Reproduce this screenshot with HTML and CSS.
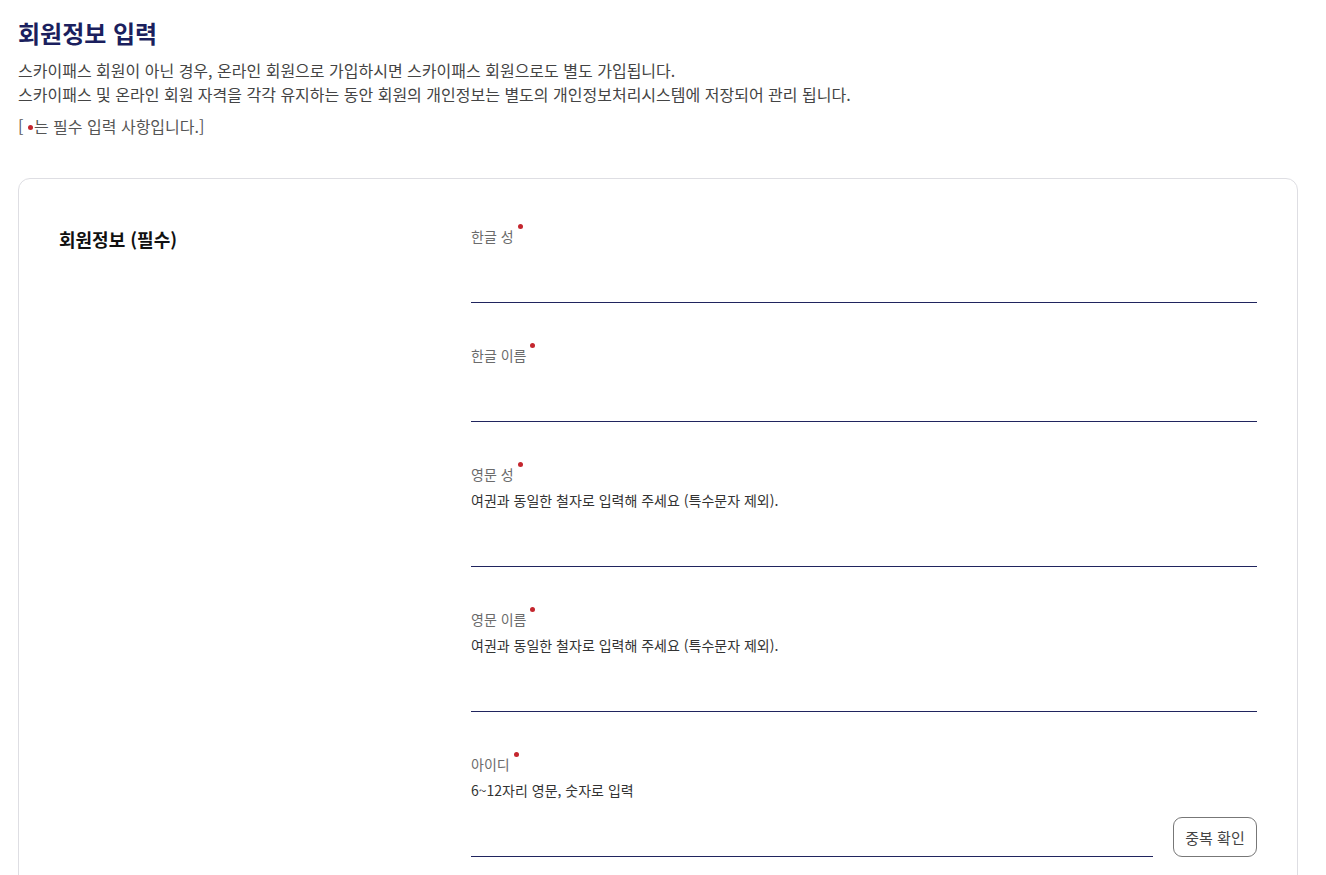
FILE: index.html
```html
<!DOCTYPE html>
<html lang="ko">
<head>
    <meta charset="UTF-8">
    <meta name="viewport" content="width=device-width, initial-scale=1.0">
    <title>회원정보 입력</title>
    <link rel="stylesheet" href="styles.css">
</head>
<body>
    <div class="page">
        <h1 class="page-title">회원정보 입력</h1>
        <p class="desc">
            스카이패스 회원이 아닌 경우, 온라인 회원으로 가입하시면 스카이패스 회원으로도 별도 가입됩니다.<br>
            스카이패스 및 온라인 회원 자격을 각각 유지하는 동안 회원의 개인정보는 별도의 개인정보처리시스템에 저장되어 관리 됩니다.
        </p>
        <p class="note">[ <span class="note-dot"></span>는 필수 입력 사항입니다.]</p>

        <section class="card">
            <h2 class="card-title">회원정보 (필수)</h2>
            <div class="fields">
                <div class="field">
                    <label class="field-label" for="korLast">한글 성</label>
                    <input class="field-input" type="text" id="korLast">
                </div>
                <div class="field">
                    <label class="field-label" for="korFirst">한글 이름</label>
                    <input class="field-input" type="text" id="korFirst">
                </div>
                <div class="field">
                    <label class="field-label" for="engLast">영문 성</label>
                    <p class="field-hint">여권과 동일한 철자로 입력해 주세요 (특수문자 제외).</p>
                    <input class="field-input" type="text" id="engLast">
                </div>
                <div class="field">
                    <label class="field-label" for="engFirst">영문 이름</label>
                    <p class="field-hint">여권과 동일한 철자로 입력해 주세요 (특수문자 제외).</p>
                    <input class="field-input" type="text" id="engFirst">
                </div>
                <div class="field">
                    <label class="field-label" for="userId">아이디</label>
                    <p class="field-hint">6~12자리 영문, 숫자로 입력</p>
                    <div class="input-row">
                        <input class="field-input" type="text" id="userId">
                        <button type="button" class="check-button">중복 확인</button>
                    </div>
                </div>
            </div>
        </section>
    </div>
</body>
</html>
```

FILE: styles.css
```css
body {
    margin: 0;
    padding: 0;
    background-color: #ffffff;
    font-family: "Noto Sans CJK KR", "Noto Sans", sans-serif;
    color: #333333;
}

.page {
    padding: 16px 28px 40px 18px;
}

.page-title {
    margin: 0;
    font-size: 24px;
    line-height: 34px;
    font-weight: 700;
    color: #1b1f5e;
}

.desc {
    margin: 8px 0 0;
    font-size: 16px;
    line-height: 24px;
    color: #444444;
}

.note {
    margin: 8px 0 0;
    font-size: 16px;
    line-height: 24px;
    color: #555555;
}

.note-dot {
    display: inline-block;
    width: 5px;
    height: 5px;
    border-radius: 50%;
    background-color: #c4262e;
    vertical-align: middle;
    margin: 0 1px 3px 0;
}

.card {
    margin-top: 40px;
    border: 1px solid #dedee3;
    border-radius: 12px;
    padding: 47px 40px 60px 40px;
    display: grid;
    grid-template-columns: 412px 1fr;
}

.card-title {
    margin: 0;
    font-size: 18px;
    line-height: 26px;
    font-weight: 700;
    color: #111111;
}

.field {
    display: flex;
    flex-direction: column;
    align-items: flex-start;
    margin-bottom: 42px;
}

.field-label {
    position: relative;
    font-size: 14px;
    line-height: 20px;
    color: #6b6b6b;
}

.field-label::after {
    content: "";
    position: absolute;
    top: -2px;
    right: -9px;
    width: 5px;
    height: 5px;
    border-radius: 50%;
    background-color: #c4262e;
}

.field-hint {
    margin: 6px 0 0;
    font-size: 14px;
    line-height: 20px;
    color: #333333;
}

.field-input {
    display: block;
    width: 100%;
    height: 57px;
    box-sizing: border-box;
    border: 0;
    border-bottom: 1px solid #20245e;
    padding: 0;
    font-size: 15px;
    font-family: inherit;
    outline: none;
    background: transparent;
}

.input-row {
    display: flex;
    align-items: flex-end;
    gap: 20px;
    width: 100%;
}

.input-row .field-input {
    flex: 1;
}

.check-button {
    flex: none;
    width: 84px;
    height: 40px;
    border: 1px solid #777777;
    border-radius: 9px;
    background-color: #ffffff;
    font-family: inherit;
    font-size: 15px;
    color: #444444;
    cursor: pointer;
    padding: 0;
}
```
